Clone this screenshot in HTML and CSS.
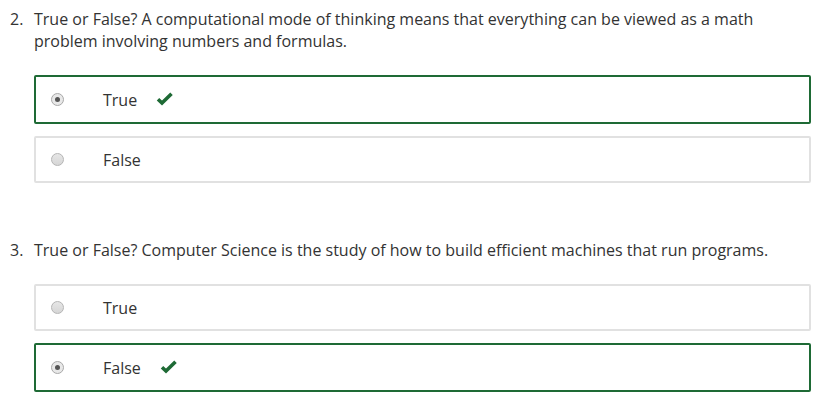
FILE: index.html
```html
<!DOCTYPE html>
<html>
<head>
<meta charset="utf-8">
<link rel="stylesheet" href="styles.css">
</head>
<body>
<div class="quiz">
  <section class="question">
    <div class="prompt"><span class="num">2.</span><span class="text">True or False? A computational mode of thinking means that everything can be viewed as a math problem involving numbers and formulas.</span></div>
    <div class="options">
      <div class="option correct">
        <span class="radio checked"></span>
        <span class="label">True</span>
        <svg class="check" width="18" height="14" viewBox="0 0 18 14"><path d="M2 7.2 L6 11 L15.5 1.8" fill="none" stroke="#1e6a35" stroke-width="3.6" stroke-linejoin="miter" stroke-linecap="butt"/></svg>
      </div>
      <div class="option">
        <span class="radio"></span>
        <span class="label">False</span>
      </div>
    </div>
  </section>
  <section class="question">
    <div class="prompt"><span class="num">3.</span><span class="text">True or False? Computer Science is the study of how to build efficient machines that run programs.</span></div>
    <div class="options">
      <div class="option">
        <span class="radio"></span>
        <span class="label">True</span>
      </div>
      <div class="option correct">
        <span class="radio checked"></span>
        <span class="label">False</span>
        <svg class="check" width="18" height="14" viewBox="0 0 18 14"><path d="M2 7.2 L6 11 L15.5 1.8" fill="none" stroke="#1e6a35" stroke-width="3.6" stroke-linejoin="miter" stroke-linecap="butt"/></svg>
      </div>
    </div>
  </section>
</div>
</body>
</html>
```

FILE: styles.css
```css
html, body {
  margin: 0;
  padding: 0;
  background: #ffffff;
}
body {
  font-family: "Open Sans", "Liberation Sans", sans-serif;
  font-size: 16px;
  line-height: 22px;
  color: #333333;
  padding: 8px 16px 0 10px;
}
.quiz {
  display: flex;
  flex-direction: column;
  gap: 56px;
}
.prompt {
  display: flex;
}
.num {
  width: 24px;
  flex: none;
}
.text {
  flex: 1;
  padding-right: 40px;
}
.options {
  margin-top: 23px;
  margin-left: 24px;
  display: flex;
  flex-direction: column;
  gap: 12px;
}
.option {
  height: 43px;
  border: 2px solid #e1e1e1;
  border-radius: 2px;
  display: flex;
  align-items: center;
  padding-left: 15px;
}
.option.correct {
  border-color: #1e6a35;
  height: 45px;
}
.radio {
  width: 11px;
  height: 11px;
  border-radius: 50%;
  border: 1px solid #b5b5b5;
  background: linear-gradient(#e6e6e6, #d6d6d6);
  flex: none;
  position: relative;
}
.radio.checked {
  background: #e8e8e8;
  border-color: #a9a9a9;
}
.radio.checked::after {
  content: "";
  position: absolute;
  left: 3px;
  top: 3px;
  width: 5px;
  height: 5px;
  border-radius: 50%;
  background: #555555;
}
.label {
  margin-left: 39px;
}
.check {
  margin-left: 19px;
  margin-top: -1px;
}
```
